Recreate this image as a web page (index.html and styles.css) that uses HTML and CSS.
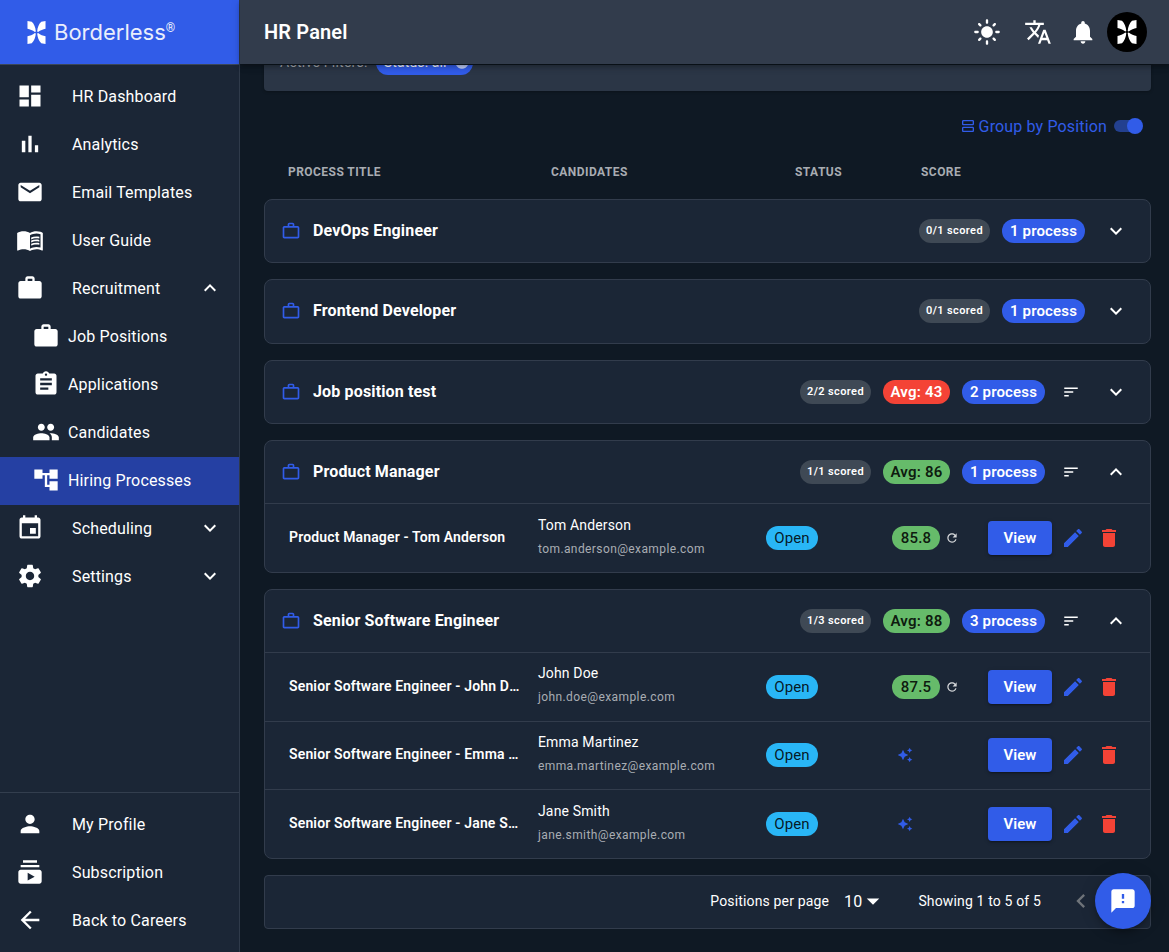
FILE: index.html
```html
<!DOCTYPE html>
<html lang="en">
<head>
    <meta charset="UTF-8">
    <meta name="viewport" content="width=device-width, initial-scale=1.0">
    <title>HR Panel - Hiring Processes</title>
    <link rel="stylesheet" href="styles.css">
</head>
<body>

    <!-- icon sprite -->
    <svg class="sprite" xmlns="http://www.w3.org/2000/svg">
        <symbol id="i-dashboard" viewBox="0 0 24 24"><path d="M3 13h8V3H3v10zm0 8h8v-6H3v6zm10 0h8V11h-8v10zm0-18v6h8V3h-8z"/></symbol>
        <symbol id="i-chart" viewBox="0 0 24 24"><path d="M5 9.2h3V19H5zM10.6 5h2.8v14h-2.8zm5.6 8H19v6h-2.8z"/></symbol>
        <symbol id="i-email" viewBox="0 0 24 24"><path d="M20 4H4c-1.1 0-1.99.9-1.99 2L2 18c0 1.1.9 2 2 2h16c1.1 0 2-.9 2-2V6c0-1.1-.9-2-2-2zm0 4l-8 5-8-5V6l8 5 8-5v2z"/></symbol>
        <symbol id="i-book" viewBox="0 0 24 24"><path d="M21 5c-1.11-.35-2.33-.5-3.5-.5-1.95 0-4.05.4-5.5 1.5-1.45-1.1-3.55-1.5-5.5-1.5S2.45 4.9 1 6v14.65c0 .25.25.5.5.5.1 0 .15-.05.25-.05C3.1 20.45 5.05 20 6.5 20c1.95 0 4.05.4 5.5 1.5 1.35-.85 3.8-1.5 5.5-1.5 1.65 0 3.35.3 4.75 1.05.1.05.15.05.25.05.25 0 .5-.25.5-.5V6c-.6-.45-1.25-.75-2-1zm0 13.5c-1.1-.35-2.3-.5-3.5-.5-1.7 0-4.15.65-5.5 1.5V8c1.35-.85 3.8-1.5 5.5-1.5 1.2 0 2.4.15 3.5.5v11.5z"/><path d="M17.5 10.5c.88 0 1.73.09 2.5.26V9.24c-.79-.15-1.64-.24-2.5-.24-1.7 0-3.24.29-4.5.83v1.66c1.13-.64 2.7-.99 4.5-.99zM13 12.49v1.66c1.13-.64 2.7-.99 4.5-.99.88 0 1.73.09 2.5.26V11.9c-.79-.15-1.64-.24-2.5-.24-1.7 0-3.24.3-4.5.83zM17.5 14.33c-1.7 0-3.24.29-4.5.83v1.66c1.13-.64 2.7-.99 4.5-.99.88 0 1.73.09 2.5.26v-1.52c-.79-.16-1.64-.24-2.5-.24z"/></symbol>
        <symbol id="i-work" viewBox="0 0 24 24"><path d="M20 6h-4V4c0-1.11-.89-2-2-2h-4c-1.11 0-2 .89-2 2v2H4c-1.11 0-1.99.89-1.99 2L2 19c0 1.11.89 2 2 2h16c1.11 0 2-.89 2-2V8c0-1.11-.89-2-2-2zm-6 0h-4V4h4v2z"/></symbol>
        <symbol id="i-work-outline" viewBox="0 0 24 24"><path d="M14 6V4h-4v2h4zM4 8v11h16V8H4zm16-2c1.11 0 2 .89 2 2v11c0 1.11-.89 2-2 2H4c-1.11 0-2-.89-2-2l.01-11c0-1.11.88-2 1.99-2h4V4c0-1.11.89-2 2-2h4c1.11 0 2 .89 2 2v2h4z"/></symbol>
        <symbol id="i-assignment" viewBox="0 0 24 24"><path d="M19 3h-4.18C14.4 1.84 13.3 1 12 1c-1.3 0-2.4.84-2.82 2H5c-1.1 0-2 .9-2 2v14c0 1.1.9 2 2 2h14c1.1 0 2-.9 2-2V5c0-1.1-.9-2-2-2zm-7 0c.55 0 1 .45 1 1s-.45 1-1 1-1-.45-1-1 .45-1 1-1zm2 14H7v-2h7v2zm3-4H7v-2h10v2zm0-4H7V7h10v2z"/></symbol>
        <symbol id="i-people" viewBox="0 0 24 24"><path d="M16 11c1.66 0 2.99-1.34 2.99-3S17.66 5 16 5c-1.66 0-3 1.34-3 3s1.34 3 3 3zm-8 0c1.66 0 2.99-1.34 2.99-3S9.66 5 8 5C6.34 5 5 6.34 5 8s1.34 3 3 3zm0 2c-2.33 0-7 1.17-7 3.5V19h14v-2.5c0-2.33-4.67-3.5-7-3.5zm8 0c-.29 0-.62.02-.97.05 1.16.84 1.97 1.97 1.97 3.45V19h6v-2.5c0-2.33-4.67-3.5-7-3.5z"/></symbol>
        <symbol id="i-tree" viewBox="0 0 24 24"><path d="M22 11V3h-7v3H9V3H2v8h7V8h2v10h4v3h7v-8h-7v3h-2V8h2v3z"/></symbol>
        <symbol id="i-event" viewBox="0 0 24 24"><path d="M17 12h-5v5h5v-5zM16 1v2H8V1H6v2H5c-1.11 0-1.99.9-1.99 2L3 19c0 1.1.89 2 2 2h14c1.1 0 2-.9 2-2V5c0-1.1-.9-2-2-2h-1V1h-2zm3 18H5V8h14v11z"/></symbol>
        <symbol id="i-settings" viewBox="0 0 24 24"><path d="M19.14 12.94c.04-.3.06-.61.06-.94 0-.32-.02-.64-.07-.94l2.03-1.58c.18-.14.23-.41.12-.61l-1.92-3.32c-.12-.22-.37-.29-.59-.22l-2.39.96c-.5-.38-1.03-.7-1.62-.94l-.36-2.54c-.04-.24-.24-.41-.48-.41h-3.84c-.24 0-.43.17-.47.41l-.36 2.54c-.59.24-1.13.57-1.62.94l-2.39-.96c-.22-.08-.47 0-.59.22L2.74 8.87c-.12.21-.08.47.12.61l2.03 1.58c-.05.3-.09.63-.09.94s.02.64.07.94l-2.03 1.58c-.18.14-.23.41-.12.61l1.92 3.32c.12.22.37.29.59.22l2.39-.96c.5.38 1.03.7 1.62.94l.36 2.54c.05.24.24.41.48.41h3.84c.24 0 .44-.17.47-.41l.36-2.54c.59-.24 1.13-.56 1.62-.94l2.39.96c.22.08.47 0 .59-.22l1.92-3.32c.12-.22.07-.47-.12-.61l-2.01-1.58zM12 15.6c-1.98 0-3.6-1.62-3.6-3.6s1.62-3.6 3.6-3.6 3.6 1.62 3.6 3.6-1.62 3.6-3.6 3.6z"/></symbol>
        <symbol id="i-person" viewBox="0 0 24 24"><path d="M12 12c2.21 0 4-1.79 4-4s-1.79-4-4-4-4 1.79-4 4 1.79 4 4 4zm0 2c-2.67 0-8 1.34-8 4v2h16v-2c0-2.66-5.33-4-8-4z"/></symbol>
        <symbol id="i-subs" viewBox="0 0 24 24"><path d="M20 8H4V6h16v2zm-2-6H6v2h12V2zm4 10v8c0 1.1-.9 2-2 2H4c-1.1 0-2-.9-2-2v-8c0-1.1.9-2 2-2h16c1.1 0 2 .9 2 2zm-6 4l-6-3.27v6.53L16 16z"/></symbol>
        <symbol id="i-back" viewBox="0 0 24 24"><path d="M20 11H7.83l5.59-5.59L12 4l-8 8 8 8 1.41-1.41L7.83 13H20v-2z"/></symbol>
        <symbol id="i-less" viewBox="0 0 24 24"><path d="M12 8l-6 6 1.41 1.41L12 10.83l4.59 4.58L18 14z"/></symbol>
        <symbol id="i-more" viewBox="0 0 24 24"><path d="M16.59 8.59L12 13.17 7.41 8.59 6 10l6 6 6-6z"/></symbol>
        <symbol id="i-sun" viewBox="0 0 24 24"><path d="M12 7c-2.76 0-5 2.24-5 5s2.24 5 5 5 5-2.24 5-5-2.24-5-5-5zM2 13h2c.55 0 1-.45 1-1s-.45-1-1-1H2c-.55 0-1 .45-1 1s.45 1 1 1zm18 0h2c.55 0 1-.45 1-1s-.45-1-1-1h-2c-.55 0-1 .45-1 1s.45 1 1 1zM11 2v2c0 .55.45 1 1 1s1-.45 1-1V2c0-.55-.45-1-1-1s-1 .45-1 1zm0 18v2c0 .55.45 1 1 1s1-.45 1-1v-2c0-.55-.45-1-1-1s-1 .45-1 1zM5.99 4.58c-.39-.39-1.03-.39-1.41 0-.39.39-.39 1.03 0 1.41l1.06 1.06c.39.39 1.03.39 1.41 0s.39-1.03 0-1.41L5.99 4.58zm12.37 12.37c-.39-.39-1.03-.39-1.41 0-.39.39-.39 1.03 0 1.41l1.06 1.06c.39.39 1.03.39 1.41 0 .39-.39.39-1.03 0-1.41l-1.06-1.06zm1.06-10.96c.39-.39.39-1.03 0-1.41-.39-.39-1.03-.39-1.41 0l-1.06 1.06c-.39.39-.39 1.03 0 1.41s1.03.39 1.41 0l1.06-1.06zM7.05 18.36c.39-.39.39-1.03 0-1.41-.39-.39-1.03-.39-1.41 0l-1.06 1.06c-.39.39-.39 1.03 0 1.41s1.03.39 1.41 0l1.06-1.06z"/></symbol>
        <symbol id="i-translate" viewBox="0 0 24 24"><path d="M12.87 15.07l-2.54-2.51.03-.03c1.74-1.94 2.98-4.17 3.71-6.53H17V4h-7V2H8v2H1v1.99h11.17C11.5 7.92 10.44 9.75 9 11.35 8.07 10.32 7.3 9.19 6.69 8h-2c.73 1.63 1.73 3.17 2.98 4.56l-5.09 5.02L4 19l5-5 3.11 3.11.76-2.04zM18.5 10h-2L12 22h2l1.12-3h4.75L21 22h2l-4.5-12zm-2.62 7l1.62-4.33L19.12 17h-3.24z"/></symbol>
        <symbol id="i-bell" viewBox="0 0 24 24"><path d="M12 22c1.1 0 2-.9 2-2h-4c0 1.1.89 2 2 2zm6-6v-5c0-3.07-1.64-5.64-4.5-6.32V4c0-.83-.67-1.5-1.5-1.5s-1.5.67-1.5 1.5v.68C7.63 5.36 6 7.92 6 11v5l-2 2v1h16v-1l-2-2z"/></symbol>
        <symbol id="i-sort" viewBox="0 0 24 24"><path d="M3 18h6v-2H3v2zM3 6v2h18V6H3zm0 7h12v-2H3v2z"/></symbol>
        <symbol id="i-edit" viewBox="0 0 24 24"><path d="M3 17.25V21h3.75L17.81 9.94l-3.75-3.75L3 17.25zM20.71 7.04c.39-.39.39-1.02 0-1.41l-2.34-2.34c-.39-.39-1.02-.39-1.41 0l-1.83 1.83 3.75 3.75 1.83-1.83z"/></symbol>
        <symbol id="i-delete" viewBox="0 0 24 24"><path d="M6 19c0 1.1.9 2 2 2h8c1.1 0 2-.9 2-2V7H6v12zM19 4h-3.5l-1-1h-5l-1 1H5v2h14V4z"/></symbol>
        <symbol id="i-refresh" viewBox="0 0 24 24"><path d="M17.65 6.35C16.2 4.9 14.21 4 12 4c-4.42 0-7.99 3.58-7.99 8s3.57 8 7.99 8c3.73 0 6.84-2.55 7.73-6h-2.08c-.82 2.33-3.04 4-5.65 4-3.31 0-6-2.69-6-6s2.69-6 6-6c1.66 0 3.14.69 4.22 1.78L13 11h7V4l-2.35 2.35z"/></symbol>
        <symbol id="i-spark" viewBox="0 0 24 24"><path d="M19 9l1.25-2.75L23 5l-2.75-1.25L19 1l-1.25 2.75L15 5l2.75 1.25L19 9zm-7.5.5L9 4 6.5 9.5 1 12l5.5 2.5L9 20l2.5-5.5L17 12l-5.5-2.5zM19 15l-1.25 2.75L15 19l2.75 1.25L19 23l1.25-2.75L23 19l-2.75-1.25L19 15z"/></symbol>
        <symbol id="i-agenda" viewBox="0 0 24 24"><path d="M19 13H5c-1.1 0-2 .9-2 2v4c0 1.1.9 2 2 2h14c1.1 0 2-.9 2-2v-4c0-1.1-.9-2-2-2zm0 6H5v-4h14v4zm0-16H5c-1.1 0-2 .9-2 2v4c0 1.1.9 2 2 2h14c1.1 0 2-.9 2-2V5c0-1.1-.9-2-2-2zm0 6H5V5h14v4z"/></symbol>
        <symbol id="i-feedback" viewBox="0 0 24 24"><path d="M20 2H4c-1.1 0-1.99.9-1.99 2L2 22l4-4h14c1.1 0 2-.9 2-2V4c0-1.1-.9-2-2-2zm-7 12h-2v-2h2v2zm0-4h-2V6h2v4z"/></symbol>
        <symbol id="i-left" viewBox="0 0 24 24"><path d="M15.41 7.41L14 6l-6 6 6 6 1.41-1.41L10.83 12z"/></symbol>
        <symbol id="i-drop" viewBox="0 0 24 24"><path d="M7 10l5 5 5-5z"/></symbol>
        <symbol id="i-cancel" viewBox="0 0 24 24"><path d="M12 2C6.47 2 2 6.47 2 12s4.47 10 10 10 10-4.47 10-10S17.53 2 12 2zm5 13.59L15.59 17 12 13.41 8.41 17 7 15.59 10.59 12 7 8.41 8.41 7 12 10.59 15.59 7 17 8.41 13.41 12 17 15.59z"/></symbol>
        <symbol id="i-mark" viewBox="0 0 20 24"><path d="M.5 0L5 .8C7.500 3 9 7 9.300 11L8.300 11.500C6 9.500 3 8.500 .5 8ZM.5 24L5 23.200C7.500 21 9 17 9.300 13L8.300 12.500C6 14.500 3 15.500 .5 16ZM19.500 0L15 .8C12.500 3 11 7 10.700 11L11.700 11.500C14 9.500 17 8.500 19.500 8ZM19.500 24L15 23.200C12.500 21 11 17 10.700 13L11.700 12.500C14 14.500 17 15.500 19.500 16Z"/></symbol>
    </svg>

    <div class="app">
        <aside class="sidebar">
            <div class="brand">
                <svg class="brand-mark"><use href="#i-mark"/></svg>
                <span class="brand-name">Borderless</span><span class="brand-reg">®</span>
            </div>

            <nav class="nav">
                <a class="nav-item"><svg class="nav-icon"><use href="#i-dashboard"/></svg>HR Dashboard</a>
                <a class="nav-item"><svg class="nav-icon"><use href="#i-chart"/></svg>Analytics</a>
                <a class="nav-item"><svg class="nav-icon"><use href="#i-email"/></svg>Email Templates</a>
                <a class="nav-item"><svg class="nav-icon"><use href="#i-book"/></svg>User Guide</a>
                <a class="nav-item"><svg class="nav-icon"><use href="#i-work"/></svg>Recruitment<svg class="nav-caret"><use href="#i-less"/></svg></a>
                <a class="nav-item sub"><svg class="nav-icon"><use href="#i-work"/></svg>Job Positions</a>
                <a class="nav-item sub"><svg class="nav-icon"><use href="#i-assignment"/></svg>Applications</a>
                <a class="nav-item sub"><svg class="nav-icon"><use href="#i-people"/></svg>Candidates</a>
                <a class="nav-item sub active"><svg class="nav-icon"><use href="#i-tree"/></svg>Hiring Processes</a>
                <a class="nav-item"><svg class="nav-icon"><use href="#i-event"/></svg>Scheduling<svg class="nav-caret"><use href="#i-more"/></svg></a>
                <a class="nav-item"><svg class="nav-icon"><use href="#i-settings"/></svg>Settings<svg class="nav-caret"><use href="#i-more"/></svg></a>
            </nav>

            <nav class="nav-bottom">
                <a class="nav-item"><svg class="nav-icon"><use href="#i-person"/></svg>My Profile</a>
                <a class="nav-item"><svg class="nav-icon"><use href="#i-subs"/></svg>Subscription</a>
                <a class="nav-item"><svg class="nav-icon"><use href="#i-back"/></svg>Back to Careers</a>
            </nav>
        </aside>

        <div class="main">
            <header class="topbar">
                <h1 class="topbar-title">HR Panel</h1>
                <svg class="top-icon sun"><use href="#i-sun"/></svg>
                <svg class="top-icon lang"><use href="#i-translate"/></svg>
                <svg class="top-icon bell"><use href="#i-bell"/></svg>
                <div class="avatar"><svg class="avatar-mark"><use href="#i-mark"/></svg></div>
            </header>

            <main class="content">
                <div class="filter-card">
                    <div class="filter-row">
                        <span class="filter-label">Active Filters:</span>
                        <span class="filter-chip">Status: all<svg class="filter-x"><use href="#i-cancel"/></svg></span>
                    </div>
                </div>

                <div class="group-row">
                    <svg class="group-icon"><use href="#i-agenda"/></svg>
                    <span class="group-label">Group by Position</span>
                    <span class="toggle"><span class="toggle-knob"></span></span>
                </div>

                <div class="thead">
                    <span>Process Title</span>
                    <span>Candidates</span>
                    <span>Status</span>
                    <span>Score</span>
                </div>

                <section class="group">
                    <div class="group-head">
                        <svg class="case-icon"><use href="#i-work-outline"/></svg>
                        <span class="group-title">DevOps Engineer</span>
                        <span class="chip chip-scored">0/1 scored</span>
                        <span class="chip chip-process">1 process</span>
                        <svg class="caret"><use href="#i-more"/></svg>
                    </div>
                </section>

                <section class="group">
                    <div class="group-head">
                        <svg class="case-icon"><use href="#i-work-outline"/></svg>
                        <span class="group-title">Frontend Developer</span>
                        <span class="chip chip-scored">0/1 scored</span>
                        <span class="chip chip-process">1 process</span>
                        <svg class="caret"><use href="#i-more"/></svg>
                    </div>
                </section>

                <section class="group">
                    <div class="group-head">
                        <svg class="case-icon"><use href="#i-work-outline"/></svg>
                        <span class="group-title">Job position test</span>
                        <span class="chip chip-scored">2/2 scored</span>
                        <span class="chip chip-avg red">Avg: 43</span>
                        <span class="chip chip-process">2 process</span>
                        <svg class="sort"><use href="#i-sort"/></svg>
                        <svg class="caret"><use href="#i-more"/></svg>
                    </div>
                </section>

                <section class="group">
                    <div class="group-head open">
                        <svg class="case-icon"><use href="#i-work-outline"/></svg>
                        <span class="group-title">Product Manager</span>
                        <span class="chip chip-scored">1/1 scored</span>
                        <span class="chip chip-avg green">Avg: 86</span>
                        <span class="chip chip-process">1 process</span>
                        <svg class="sort"><use href="#i-sort"/></svg>
                        <svg class="caret"><use href="#i-less"/></svg>
                    </div>
                    <div class="row">
                        <div class="row-title">Product Manager - Tom Anderson</div>
                        <div class="cand">
                            <div class="cand-name">Tom Anderson</div>
                            <div class="cand-mail">tom.anderson@example.com</div>
                        </div>
                        <div><span class="chip chip-open">Open</span></div>
                        <div class="score"><span class="chip chip-score">85.8</span><svg class="refresh"><use href="#i-refresh"/></svg></div>
                        <div class="actions">
                            <button class="view-btn">View</button>
                            <svg class="act edit"><use href="#i-edit"/></svg>
                            <svg class="act del"><use href="#i-delete"/></svg>
                        </div>
                    </div>
                </section>

                <section class="group">
                    <div class="group-head open">
                        <svg class="case-icon"><use href="#i-work-outline"/></svg>
                        <span class="group-title">Senior Software Engineer</span>
                        <span class="chip chip-scored">1/3 scored</span>
                        <span class="chip chip-avg green">Avg: 88</span>
                        <span class="chip chip-process">3 process</span>
                        <svg class="sort"><use href="#i-sort"/></svg>
                        <svg class="caret"><use href="#i-less"/></svg>
                    </div>
                    <div class="row">
                        <div class="row-title">Senior Software Engineer - John Doe</div>
                        <div class="cand">
                            <div class="cand-name">John Doe</div>
                            <div class="cand-mail">john.doe@example.com</div>
                        </div>
                        <div><span class="chip chip-open">Open</span></div>
                        <div class="score"><span class="chip chip-score">87.5</span><svg class="refresh"><use href="#i-refresh"/></svg></div>
                        <div class="actions">
                            <button class="view-btn">View</button>
                            <svg class="act edit"><use href="#i-edit"/></svg>
                            <svg class="act del"><use href="#i-delete"/></svg>
                        </div>
                    </div>
                    <div class="row">
                        <div class="row-title">Senior Software Engineer - Emma Martinez</div>
                        <div class="cand">
                            <div class="cand-name">Emma Martinez</div>
                            <div class="cand-mail">emma.martinez@example.com</div>
                        </div>
                        <div><span class="chip chip-open">Open</span></div>
                        <div class="score"><svg class="spark"><use href="#i-spark"/></svg></div>
                        <div class="actions">
                            <button class="view-btn">View</button>
                            <svg class="act edit"><use href="#i-edit"/></svg>
                            <svg class="act del"><use href="#i-delete"/></svg>
                        </div>
                    </div>
                    <div class="row">
                        <div class="row-title">Senior Software Engineer - Jane Smith</div>
                        <div class="cand">
                            <div class="cand-name">Jane Smith</div>
                            <div class="cand-mail">jane.smith@example.com</div>
                        </div>
                        <div><span class="chip chip-open">Open</span></div>
                        <div class="score"><svg class="spark"><use href="#i-spark"/></svg></div>
                        <div class="actions">
                            <button class="view-btn">View</button>
                            <svg class="act edit"><use href="#i-edit"/></svg>
                            <svg class="act del"><use href="#i-delete"/></svg>
                        </div>
                    </div>
                </section>

                <div class="pager">
                    <span class="pager-label">Positions per page</span>
                    <span class="pager-size">10</span>
                    <svg class="pager-drop"><use href="#i-drop"/></svg>
                    <span class="pager-info">Showing 1 to 5 of 5</span>
                    <svg class="pager-prev"><use href="#i-left"/></svg>
                </div>
            </main>
        </div>
    </div>

    <button class="fab"><svg class="fab-icon"><use href="#i-feedback"/></svg></button>

</body>
</html>
```

FILE: styles.css
```css
* {
    box-sizing: border-box;
}
html, body {
    height: 100%;
}
body {
    margin: 0;
    font-family: Roboto, "Liberation Sans", sans-serif;
    letter-spacing: .15px;
    background-color: #0f1924;
    color: #fff;
    overflow: hidden;
}
svg {
    fill: currentColor;
    flex-shrink: 0;
}
.sprite {
    display: none;
}
.app {
    display: flex;
    height: 952px;
}

/* sidebar */
.sidebar {
    width: 240px;
    flex-shrink: 0;
    display: flex;
    flex-direction: column;
    background-color: #1b2636;
    border-right: 1px solid #2f3a4a;
}
.brand {
    height: 65px;
    flex-shrink: 0;
    display: flex;
    align-items: center;
    padding-left: 27px;
    background-color: #315ce8;
    border-bottom: 1px solid #3a4658;
}
.brand-mark {
    width: 19px;
    height: 23px;
    margin-right: 8px;
}
.brand-name {
    font-family: Inter, Roboto, sans-serif;
    font-size: 22px;
    font-weight: 400;
    letter-spacing: 0;
    color: #e9eefc;
}
.brand-reg {
    font-size: 12px;
    margin-top: -9px;
    color: #e9eefc;
}
.nav {
    flex: 1;
    padding-top: 8px;
}
.nav .nav-item {
    padding-bottom: 2px;
}
.nav-bottom {
    border-top: 1px solid #333e4e;
    padding: 7px 0 8px;
}
.nav-item {
    height: 48px;
    display: flex;
    align-items: center;
    padding-left: 16px;
    font-size: 16px;
    color: #fff;
}
.nav-icon {
    width: 28px;
    height: 28px;
    margin-right: 28px;
}
.nav-item.sub {
    padding-left: 32px;
}
.nav-item.sub .nav-icon {
    margin-right: 8px;
}
.nav-item.active {
    background-color: #2540a3;
}
.nav-caret {
    width: 24px;
    height: 24px;
    margin-left: auto;
    margin-right: 17px;
}

/* top bar */
.main {
    flex: 1;
    min-width: 0;
    display: flex;
    flex-direction: column;
}
.topbar {
    position: relative;
    z-index: 2;
    height: 64px;
    flex-shrink: 0;
    display: flex;
    align-items: center;
    padding: 0 22px 0 24px;
    background-color: #323c4c;
    box-shadow: 0 2px 4px -1px rgba(0,0,0,.2), 0 4px 5px rgba(0,0,0,.14), 0 1px 10px rgba(0,0,0,.12);
}
.topbar-title {
    flex: 1;
    margin: 0;
    font-size: 20px;
    font-weight: 600;
}
.top-icon {
    width: 28px;
    height: 28px;
}
.lang {
    margin-left: 23px;
}
.bell {
    margin-left: 17px;
}
.avatar {
    width: 40px;
    height: 40px;
    margin-left: 10px;
    display: flex;
    align-items: center;
    justify-content: center;
    border-radius: 50%;
    background-color: #000;
}
.avatar-mark {
    width: 20px;
    height: 24px;
}

/* content */
.content {
    flex: 1;
    padding: 1px 18px 0 24px;
}
.filter-card {
    height: 26px;
    overflow: hidden;
    background-color: #2b3646;
    border-radius: 0 0 4px 4px;
    box-shadow: 0 1px 3px rgba(0,0,0,.3);
}
.filter-row {
    display: flex;
    align-items: center;
    margin-top: -14px;
    padding-left: 16px;
    gap: 8px;
}
.filter-label {
    margin-bottom: 2px;
    font-size: 14px;
    letter-spacing: .25px;
    color: #a6abb3;
}
.filter-chip {
    display: inline-flex;
    align-items: center;
    width: 97px;
    height: 24px;
    padding: 0 3px 2px 8px;
    border-radius: 12px;
    background-color: #315ce8;
    font-size: 14px;
}
.filter-x {
    width: 16px;
    height: 16px;
    margin-left: auto;
    opacity: .7;
}
.group-row {
    display: flex;
    align-items: center;
    justify-content: flex-end;
    height: 22px;
    margin-top: 24px;
    padding-right: 10px;
    color: #315ce8;
}
.group-icon {
    width: 16px;
    height: 16px;
    margin-right: 3px;
}
.group-label {
    font-size: 16px;
}
.toggle {
    position: relative;
    width: 27px;
    height: 12px;
    margin-left: 7px;
    border-radius: 6px;
    background-color: #23408f;
}
.toggle-knob {
    position: absolute;
    top: -2px;
    right: -2px;
    width: 16px;
    height: 16px;
    border-radius: 50%;
    background-color: #315ce8;
}
.thead {
    display: grid;
    grid-template-columns: 263px 244px 126px 1fr;
    align-items: center;
    height: 62px;
    padding: 8px 0 0 24px;
    font-size: 12px;
    font-weight: 700;
    letter-spacing: .45px;
    text-transform: uppercase;
    color: #a8acb2;
}

/* position groups */
.group {
    margin-bottom: 16px;
    background-color: #1b2636;
    border: 1px solid #323c4c;
    border-radius: 8px;
    overflow: hidden;
}
.group-head {
    height: 62.3px;
    display: flex;
    align-items: center;
    padding: 0 22px 0 16px;
}
.group-head.open {
    height: 63px;
    border-bottom: 1px solid #323c4c;
}
.case-icon {
    width: 20px;
    height: 20px;
    margin-right: 12px;
    color: #315ce8;
}
.group-title {
    flex: 1;
    padding-bottom: 1px;
    font-size: 16px;
    font-weight: 700;
}
.caret {
    width: 24px;
    height: 24px;
    margin-left: 19px;
}
.sort {
    width: 18px;
    height: 18px;
    margin-left: 17px;
    margin-right: 5px;
}
.chip {
    display: inline-flex;
    align-items: center;
    justify-content: center;
    height: 24px;
    border-radius: 12px;
    white-space: nowrap;
}
.chip-scored {
    width: 71px;
    margin-right: 12px;
    padding-bottom: 1px;
    background-color: #3f4955;
    font-size: 11px;
    font-weight: 600;
    letter-spacing: .4px;
}
.chip-avg {
    width: 67px;
    margin-right: 12px;
    font-size: 15px;
    font-weight: 600;
    letter-spacing: .2px;
}
.chip-avg.red {
    background-color: #f44336;
}
.chip-avg.green {
    background-color: #66bb6a;
    color: rgba(0,0,0,.87);
}
.chip-process {
    width: 83px;
    background-color: #315ce8;
    font-size: 15px;
    font-weight: 600;
}
.row {
    display: grid;
    grid-template-columns: 249px 228px 126px 96px 1fr;
    align-items: center;
    height: 68.4px;
    padding-left: 24px;
    border-bottom: 1px solid #323c4c;
}
.row:last-child {
    border-bottom: none;
}
.row-title {
    padding: 0 16px 2px 0;
    font-size: 14px;
    font-weight: 600;
    white-space: nowrap;
    overflow: hidden;
    text-overflow: ellipsis;
}
.cand {
    padding-bottom: 5px;
}
.cand-name {
    font-size: 14px;
    line-height: 20px;
}
.cand-mail {
    margin-top: 6px;
    font-size: 12px;
    line-height: 16px;
    letter-spacing: .4px;
    color: #a9adb3;
}
.chip-open {
    width: 52px;
    background-color: #29b6f6;
    color: rgba(0,0,0,.87);
    font-size: 15px;
}
.score {
    display: flex;
    align-items: center;
}
.chip-score {
    width: 48px;
    background-color: #66bb6a;
    color: rgba(0,0,0,.87);
    font-size: 15px;
    font-weight: 500;
}
.refresh {
    width: 14px;
    height: 14px;
    margin-left: 5px;
    color: #d5d7da;
}
.spark {
    width: 16px;
    height: 16px;
    margin-left: 5px;
    color: #315ce8;
}
.actions {
    display: flex;
    align-items: center;
}
.view-btn {
    width: 64px;
    height: 34px;
    border: none;
    border-radius: 4px;
    background-color: #315ce8;
    color: #fff;
    font-family: inherit;
    font-size: 15px;
    font-weight: 600;
    box-shadow: 0 3px 1px -2px rgba(0,0,0,.2), 0 2px 2px rgba(0,0,0,.14), 0 1px 5px rgba(0,0,0,.12);
}
.act {
    width: 24px;
    height: 24px;
}
.edit {
    margin-left: 9px;
    color: #315ce8;
}
.del {
    margin-left: 12px;
    color: #f44336;
}

/* pagination */
.pager {
    display: flex;
    align-items: center;
    justify-content: flex-end;
    height: 54px;
    padding: 0 55px 2px 0;
    background-color: #1b2636;
    border: 1px solid #323c4c;
    border-radius: 4px;
    font-size: 14px;
}
.pager-size {
    margin-left: 15px;
    font-size: 16px;
}
.pager-drop {
    width: 30px;
    height: 30px;
    margin-left: -4.5px;
}
.pager-info {
    margin-left: 30.5px;
}
.pager-prev {
    width: 28px;
    height: 28px;
    margin-left: 26px;
    color: #6f747a;
}
.fab {
    position: fixed;
    right: 18px;
    bottom: 23px;
    display: flex;
    align-items: center;
    justify-content: center;
    width: 56px;
    height: 56px;
    border: none;
    border-radius: 50%;
    background-color: #315ce8;
    color: #fff;
    box-shadow: 0 3px 5px -1px rgba(0,0,0,.2), 0 6px 10px rgba(0,0,0,.14), 0 1px 18px rgba(0,0,0,.12);
}
.fab-icon {
    width: 28px;
    height: 28px;
}
```
